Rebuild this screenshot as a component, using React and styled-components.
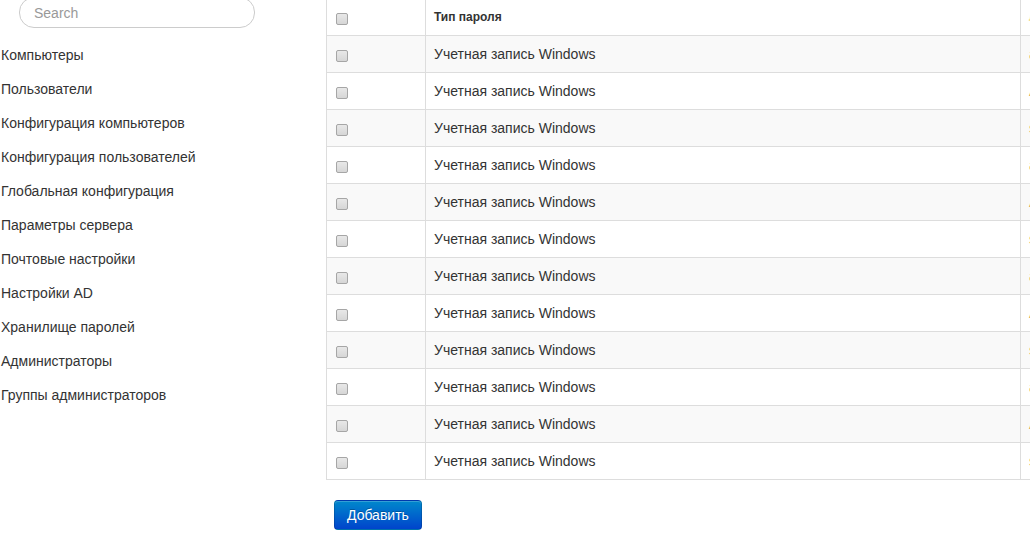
import React from "react";
import styled, { createGlobalStyle } from "styled-components";

const GlobalStyle = createGlobalStyle`
  html, body {
    margin: 0;
    padding: 0;
    background: #fff;
    overflow: hidden;
  }
  body {
    font-family: "Liberation Sans", Arial, sans-serif;
    font-size: 14px;
    color: #333;
  }
`;

const menu = [
  "Компьютеры",
  "Пользователи",
  "Конфигурация компьютеров",
  "Конфигурация пользователей",
  "Глобальная конфигурация",
  "Параметры сервера",
  "Почтовые настройки",
  "Настройки AD",
  "Хранилище паролей",
  "Администраторы",
  "Группы администраторов",
];

const rows = Array.from({ length: 12 }, (_, i) => ({
  id: i + 1,
  type: "Учетная запись Windows",
  owner: ["admin", "Администратор", "svc_backup"][i % 3],
}));

const Page = styled.div`
  display: flex;
  width: 1400px;
  height: 544px;
`;

const Sidebar = styled.aside`
  width: 325px;
  flex-shrink: 0;
  padding-left: 1px;
`;

const SearchBox = styled.input`
  display: block;
  box-sizing: border-box;
  margin: -3px 0 0 18px;
  width: 236px;
  height: 31px;
  padding: 0 14px;
  border: 1px solid #ccc;
  border-radius: 15px;
  font-family: inherit;
  font-size: 14px;
  color: #555;
  outline: none;

  &::placeholder {
    color: #999;
  }
`;

const Menu = styled.ul`
  list-style: none;
  margin: 10px 0 0;
  padding: 0;
`;

const MenuItem = styled.li`
  height: 34px;
  line-height: 34px;
  font-size: 14px;
  color: #333;
  white-space: nowrap;
`;

const Content = styled.main`
  flex: 1;
`;

const Table = styled.table`
  margin-top: -2px;
  width: 1100px;
  border-collapse: collapse;
  border-left: 1px solid #ddd;
  border-bottom: 1px solid #ddd;
`;

const Row = styled.tr`
  background: ${(p) => (p.$striped ? "#f9f9f9" : "#fff")};
`;

const Cell = styled.td`
  padding: 8px;
  height: 20px;
  line-height: 20px;
  border-top: 1px solid #ddd;
  border-left: 1px solid #ddd;
  text-align: left;
  vertical-align: top;
  white-space: nowrap;
  color: ${(p) => p.$tone || "#333"};
  width: ${(p) => p.$w || "auto"};
`;

const HeadCell = styled(Cell).attrs({ as: "th" })`
  font-size: 12px;
  font-weight: bold;
`;

const Check = styled.input.attrs({ type: "checkbox" })`
  appearance: none;
  display: block;
  box-sizing: border-box;
  margin: 6px 0 0 1px;
  width: 12px;
  height: 12px;
  border: 1px solid #a6a6a6;
  border-radius: 2px;
  background: linear-gradient(#e8e8e8, #d6d6d6);
`;

const Button = styled.button`
  margin: 20px 0 0 8px;
  height: 30px;
  padding: 4px 12px;
  font-family: inherit;
  font-size: 14px;
  line-height: 20px;
  color: #fff;
  text-shadow: 0 -1px 0 rgba(0, 0, 0, 0.25);
  background: linear-gradient(#0088cc, #0044cc);
  border: 1px solid rgba(0, 0, 0, 0.15);
  border-radius: 4px;
  box-shadow: inset 0 1px 0 rgba(255, 255, 255, 0.2);
  cursor: pointer;
`;

export default function App() {
  return (
    <>
      <GlobalStyle />
      <Page>
        <Sidebar>
          <SearchBox placeholder="Search" />
          <Menu>
            {menu.map((m) => (
              <MenuItem key={m}>{m}</MenuItem>
            ))}
          </Menu>
        </Sidebar>
        <Content>
          <Table>
            <thead>
              <Row>
                <HeadCell $w="82px">
                  <Check />
                </HeadCell>
                <HeadCell $w="578px">Тип пароля</HeadCell>
                <HeadCell $tone="#f3dc8c">Логин</HeadCell>
              </Row>
            </thead>
            <tbody>
              {rows.map((r, i) => (
                <Row key={r.id} $striped={i % 2 === 0}>
                  <Cell>
                    <Check />
                  </Cell>
                  <Cell>{r.type}</Cell>
                  <Cell $tone="#d9a25a">{r.owner}</Cell>
                </Row>
              ))}
            </tbody>
          </Table>
          <Button>Добавить</Button>
        </Content>
      </Page>
    </>
  );
}
